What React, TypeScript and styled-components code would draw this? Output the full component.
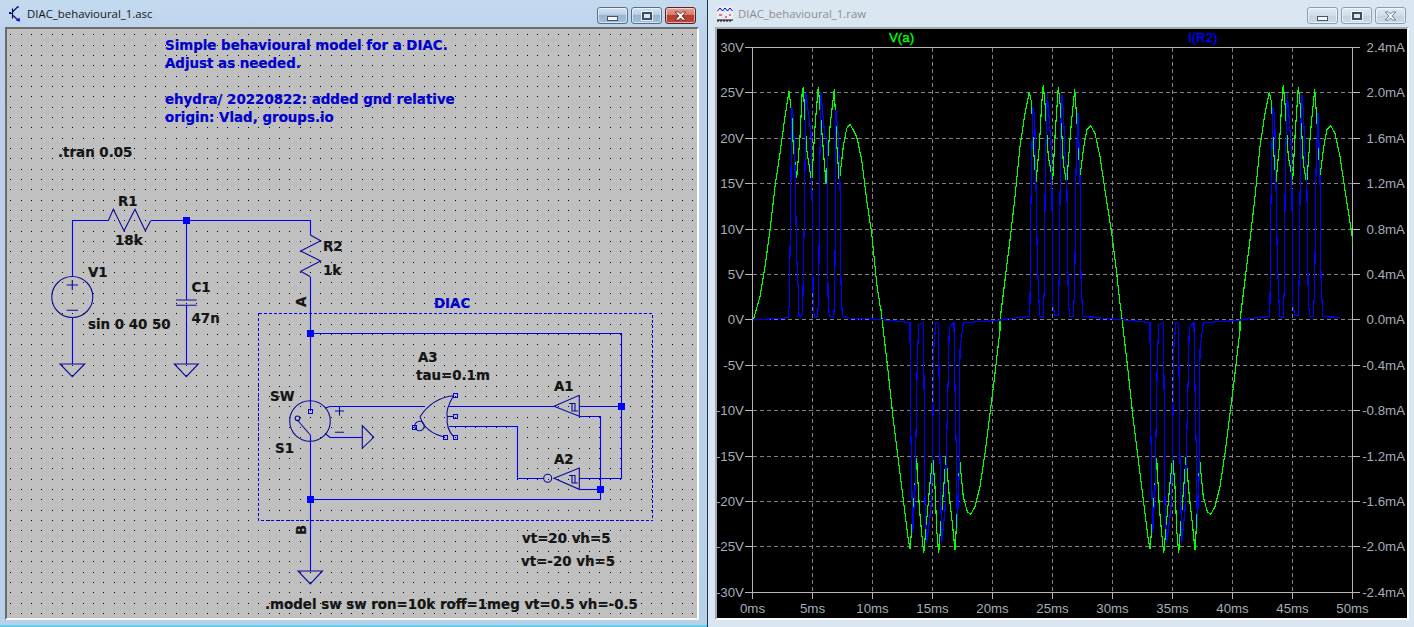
import React from "react";
import styled, { createGlobalStyle } from "styled-components";

const Global = createGlobalStyle`
  html, body { margin: 0; padding: 0; width: 1414px; height: 627px; overflow: hidden; background: #b9d1ea; }
  #root { width: 1414px; height: 627px; }
`;

const Desktop = styled.div`
  display: flex;
  width: 1414px;
  height: 627px;
`;

const Win = styled.section<{ $active?: boolean }>`
  flex: 0 0 707px;
  box-sizing: border-box;
  display: flex;
  flex-direction: column;
  background: ${(p) =>
    p.$active ? "linear-gradient(180deg,#c4daef 0,#bad2ea 40px,#b8d1ea 100%)" : "#dae7f3"};
  border-left: ${(p) => (p.$active ? "none" : "1px solid #1f3347")};
  border-bottom: ${(p) => (p.$active ? "2px solid #5ed0ea" : "none")};
  padding: ${(p) => (p.$active ? "0 8px 5px 5px" : "0 5px 7px 7px")};
`;

const TitleBar = styled.header<{ $active?: boolean }>`
  flex: 0 0 27px;
  display: flex;
  align-items: flex-start;
  margin-right: 3px;
  padding-left: ${(p) => (p.$active ? "4px" : "2px")};
`;

const TitleIcon = styled.svg`
  flex: none;
  margin-top: 6px;
  margin-right: 5px;
`;

const TitleText = styled.h1<{ $active?: boolean }>`
  flex: 1;
  margin: 6px 0 0;
  font: 400 11.4px/16px "Open Sans", "Noto Sans", sans-serif;
  color: ${(p) => (p.$active ? "#161616" : "#8d8d8d")};
  white-space: nowrap;
`;

const Buttons = styled.div`
  display: flex;
  gap: 3px;
  margin-top: 7px;
`;

const CaptionButton = styled.div<{ $kind: "min" | "max" | "close"; $active?: boolean }>`
  box-sizing: border-box;
  width: 31px;
  height: 17px;
  display: flex;
  align-items: center;
  justify-content: center;
  border-radius: 3px;
  border: 1px solid
    ${(p) => (p.$kind === "close" && p.$active ? "#5c2028" : p.$active ? "#5a6f8c" : "#8e9db0")};
  box-shadow: inset 0 0 0 1px rgba(255, 255, 255, 0.55);
  background: ${(p) =>
    p.$kind === "close" && p.$active
      ? "linear-gradient(180deg,#e3a093 0,#d6796b 45%,#b83c2c 50%,#b9473a 100%)"
      : p.$active
      ? "linear-gradient(180deg,#d6e3f0 0,#b8cde3 45%,#98b5d4 50%,#a3bfdb 100%)"
      : "linear-gradient(180deg,#e2ebf5 0,#cfdcea 50%,#c4d3e4 52%,#cbd9e8 100%)"};
`;

const MinGlyph = styled.span`
  display: block;
  width: 11px;
  height: 5px;
  margin-top: 5px;
  box-sizing: border-box;
  background: #f4f7fb;
  border: 1px solid #44546a;
`;

const MaxGlyph = styled.span`
  display: block;
  width: 10px;
  height: 8px;
  box-sizing: border-box;
  border: 2px solid #3d4d63;
  outline: 1px solid rgba(255, 255, 255, 0.75);
  background: #dce6f1;
`;

const CanvasFrame = styled.main<{ $dim?: boolean }>`
  flex: 1;
  min-height: 0;
  box-sizing: border-box;
  border-style: solid;
  border-width: 2px;
  border-color: ${(p) => (p.$dim ? "#a3a9ae" : "#6b6b6b")} #ffffff #ffffff ${(p) => (p.$dim ? "#a3a9ae" : "#6b6b6b")};
`;

const Drawing = styled.svg<{ $bg: string }>`
  display: block;
  width: 100%;
  height: 100%;
  background: ${(p) => p.$bg};
`;

const SchemText = styled.text<{ $blue?: boolean }>`
  font: 700 13.4px "DejaVu Sans", Verdana, sans-serif;
  fill: ${(p) => (p.$blue ? "#0000cc" : "#141414")};
  stroke: ${(p) => (p.$blue ? "#0000cc" : "#141414")};
  stroke-width: 0.2px;
`;

const Wire = styled.polyline`
  fill: none;
  stroke: #0000ff;
  stroke-width: 1.1;
`;

const Sym = styled.path`
  fill: none;
  stroke: #0a0a9a;
  stroke-width: 1.1;
`;

const Node = styled.rect`
  fill: #0000ff;
  shape-rendering: crispEdges;
`;

const Pin = styled.rect`
  fill: none;
  stroke: #0000e0;
  stroke-width: 1;
  shape-rendering: crispEdges;
`;

const DashBox = styled.rect`
  fill: none;
  stroke: #0000e0;
  stroke-width: 1;
  stroke-dasharray: 3 2;
  shape-rendering: crispEdges;
`;

const Dots = styled.path`
  fill: #000;
  shape-rendering: crispEdges;
`;

const AxisLine = styled.path`
  fill: none;
  stroke: #b6b6b6;
  stroke-width: 1;
  shape-rendering: crispEdges;
`;

const GridLine = styled.path`
  fill: none;
  stroke: #808080;
  stroke-width: 1;
  stroke-dasharray: 4 3;
  shape-rendering: crispEdges;
`;

const AxisText = styled.text`
  font: 400 13.3px "Liberation Sans", Arial, sans-serif;
  fill: #a4adb8;
`;

const TraceName = styled.text<{ $color: string }>`
  font: 400 13.3px "Liberation Sans", Arial, sans-serif;
  fill: ${(p) => p.$color};
  stroke: ${(p) => p.$color};
  stroke-width: 0.35px;
`;

const Trace = styled.polyline<{ $color: string }>`
  fill: none;
  stroke: ${(p) => p.$color};
  stroke-width: 1.15;
  shape-rendering: crispEdges;
`;

type P = [number, number];
const seg = (ox: number, oy: number, pts: P[]): P[] => pts.map(([x, y]) => [ox + x / 3, oy + y / 3]);
const str = (pts: P[]) => pts.map(([x, y]) => `${x.toFixed(1)},${y.toFixed(1)}`).join(" ");

const gA: P[] = [[10,750],[30,680],[45,590],[60,480],[75,350],[90,250],[105,140],[117,62],[125,130],[130,230],[140,325],[150,200],[157,60],[160,52],[170,240],[185,335],[195,170],[205,50],[215,180],[228,340],[240,170],[253,58],[260,220],[268,335],[280,230],[290,175],[300,162],[320,200],[335,270],[350,390],[365,490],[380,640],[392,720]];
const gB: P[] = [[63,0],[70,60],[85,190],[100,330],[115,450],[130,570],[145,690],[150,718],[160,600],[170,445],[178,590],[185,670],[191,730],[200,630],[210,520],[218,440],[225,530],[230,660],[236,728],[245,610],[258,440],[268,560],[278,650],[285,720],[293,580],[299,450],[310,560],[322,605],[332,613],[345,590],[360,530],[375,430],[390,310],[405,190],[420,60]];
const gC: P[] = [[0,750],[15,630],[30,510],[45,380],[60,230],[75,130],[88,65],[95,100],[100,230],[108,335],[118,230],[125,100],[130,45],[135,100],[145,260],[158,330],[165,200],[175,50],[182,120],[190,280],[200,340],[212,180],[224,58],[232,170],[240,320],[250,240],[260,180],[272,168],[285,190],[300,260],[315,360],[335,490],[350,610],[360,700]];

const bA: P[] = [[10,750],[115,743],[118,700],[122,400],[125,110],[130,140],[135,290],[140,560],[145,660],[147,738],[152,742],[158,730],[160,600],[163,450],[168,70],[175,130],[183,190],[186,370],[190,720],[195,742],[203,740],[206,670],[209,300],[213,70],[220,150],[225,200],[232,220],[234,680],[238,738],[248,742],[252,730],[255,580],[258,120],[265,200],[270,340],[273,640],[277,738],[300,745],[330,747]];
const bB: P[] = [[0,25],[40,27],[100,32],[150,38],[150,65],[152,340],[155,500],[158,670],[165,540],[172,150],[176,45],[190,37],[192,210],[195,580],[200,700],[206,650],[215,570],[222,100],[228,38],[235,40],[236,100],[240,450],[245,700],[255,600],[265,190],[268,50],[282,38],[283,130],[290,490],[292,655],[298,480],[300,120],[310,38],[400,32]];
const bC: P[] = [[0,750],[50,743],[88,740],[90,700],[92,440],[98,110],[104,140],[107,300],[112,560],[116,680],[120,740],[130,742],[133,650],[136,300],[142,70],[150,180],[155,250],[158,700],[165,738],[175,735],[178,600],[182,180],[186,75],[190,120],[195,250],[200,300],[205,700],[210,740],[220,740],[224,650],[228,300],[234,130],[240,320],[243,620],[248,740],[300,742]];

const greenTrace = [...seg(750, 70, gA), ...seg(860, 310, gB), ...seg(1000, 70, gC), ...seg(1100, 310, gB), ...seg(1240, 70, gC)];
const blueTrace = [...seg(750, 70, bA), ...seg(860, 310, bB), ...seg(1000, 70, bC), ...seg(1100, 310, bB), ...seg(1240, 70, bC)];

const PX0 = 752.5;
const PY0 = 47.5;
const DY = 544.8 / 12;
const xTicks = Array.from({ length: 11 }, (_, i) => i);
const yTicks = Array.from({ length: 13 }, (_, i) => i);
const xAt = (i: number) => Math.round(PX0 + i * 60 - 0.5) + 0.5;
const yAt = (i: number) => Math.round(PY0 + i * DY - 0.5) + 0.5;
const leftLabels = ["30V","25V","20V","15V","10V","5V","0V","-5V","-10V","-15V","-20V","-25V","-30V"];
const rightLabels = ["2.4mA","2.0mA","1.6mA","1.2mA","0.8mA","0.4mA","0.0mA","-0.4mA","-0.8mA","-1.2mA","-1.6mA","-2.0mA","-2.4mA"];

const dotPath = (() => {
  const step = 124 / 12;
  let d = "";
  for (let i = -30; i < 40; i++) {
    const x = Math.round(310 + i * step);
    if (x < 7 || x >= 697) continue;
    for (let j = -19; j < 39; j++) {
      const y = Math.round(220.4 + j * step);
      if (y < 29 || y >= 618) continue;
      d += `M${x} ${y}h1v1h-1z`;
    }
  }
  return d;
})();

const notes: [string, number, number, boolean?][] = [
  ["Simple behavioural model for a DIAC.", 165, 50, true],
  ["Adjust as needed.", 165, 68, true],
  ["ehydra/ 20220822: added gnd relative", 165, 104, true],
  ["origin: Vlad, groups.io", 165, 122, true],
  ["DIAC", 434, 308, true],
  [".tran 0.05", 58, 157],
  ["R1", 118, 206],
  ["18k", 115, 245],
  ["V1", 88, 277],
  ["sin 0 40 50", 88, 329],
  ["C1", 191.5, 292],
  ["47n", 191.5, 323],
  ["R2", 323, 251],
  ["1k", 323, 275],
  ["A3", 418, 362],
  ["tau=0.1m", 416, 380],
  ["A1", 554, 391],
  ["A2", 554, 464],
  ["SW", 270, 401],
  ["S1", 275, 453],
  ["vt=20 vh=5", 522, 543],
  ["vt=-20 vh=5", 521, 566],
  [".model sw sw ron=10k roff=1meg vt=0.5 vh=-0.5", 265, 609],
];

const wires: string[] = [
  "72.5,364 72.5,317",
  "72.5,277 72.5,220.5 108,220.5",
  "151,220.5 310.5,220.5 310.5,235",
  "186.5,220.5 186.5,300",
  "186.5,305 186.5,364",
  "310.5,277 310.5,411",
  "310.5,435 310.5,571",
  "310.5,333.5 621.5,333.5 621.5,478.5 579.5,478.5",
  "621.5,406.5 579.5,406.5",
  "554,406.5 449,406.5",
  "330,406.5 425,406.5",
  "330,437.5 362,437.5",
  "579.5,416.5 600.5,416.5 600.5,499.5 310.5,499.5",
  "579.5,489.5 600.5,489.5",
  "543.5,478.5 517.5,478.5 517.5,426.5 449,426.5",
];

const symbols: string[] = [
  "M108.3 220.7L113.3 209.3L124 230.7L135 209.3L145.3 230.7L150.7 220.7",
  "M310.3 235L320.7 240.7L300.7 251L320.7 261L300.7 271.3L310.3 276.7",
  "M66.7 285H78M72.3 280V290M66.7 310.3H78",
  "M176 300H196.7M176 305.3H196.7",
  "M60 364H84.7L72.3 376.7Z",
  "M174.3 364H198.3L186.3 376.7Z",
  "M298 571H322.5L310.3 584Z",
  "M362.3 425.7V448.3L373.7 437.3Z",
  "M325 408L330 406.5M325 433.3L330 437.5",
  "M297.3 420L310.3 435",
  "M335 411H344M339.5 406.5V415.5M335 432.3H344",
  "M554 406.3L579.3 395.3V416.3Z",
  "M554 478.3L579.3 468V489.3Z",
  "M569 403.5H575V411M572 403.5V411H578",
  "M569 475.5H575V483M572 475.5V483H578",
  "M420 416.7C429 403 441 397 453.5 395.7C448 405 446 412 447.3 416.5C446 426 449 432 454 437.3",
  "M420 416.7C423 427 431 434 445 437.3",
  "M447.3 416.5H453",
];

const circles: [number, number, number][] = [
  [72.3, 297, 20.5],
  [310, 421, 20.3],
  [297.5, 418.3, 2.3],
  [547.7, 478.2, 4],
  [419.5, 426, 4.7],
];

const nodes: P[] = [[186.5,220.5],[310.5,333.5],[621.5,406.5],[600.5,489.5],[310.5,499.5]];
const pins: P[] = [[455,395.5],[455,416.5],[455,437.5],[445,437.5],[414,427],[310.5,411]];

const Schematic = () => (
  <Drawing $bg="#c0c0c0" viewBox="7 29 690 589" preserveAspectRatio="none">
    <Dots d={dotPath} />
    <DashBox x={258.5} y={313.5} width={394} height={207} />
    {wires.map((w) => <Wire key={w} points={w} />)}
    {symbols.map((d) => <Sym key={d} d={d} />)}
    {circles.map(([cx, cy, r]) => <Sym key={cx} as="circle" cx={cx} cy={cy} r={r} />)}
    {nodes.map(([x, y]) => <Node key={`${x}${y}`} x={x - 3.5} y={y - 3.5} width={7} height={7} />)}
    {pins.map(([x, y]) => <Pin key={`${x}${y}`} x={x - 2} y={y - 2} width={4} height={4} />)}
    {notes.map(([t, x, y, blue]) => <SchemText key={t} x={x} y={y} $blue={blue}>{t}</SchemText>)}
    <SchemText x={306} y={307} transform="rotate(-90 306 307)">A</SchemText>
    <SchemText x={306} y={535} transform="rotate(-90 306 535)">B</SchemText>
  </Drawing>
);

const Plot = () => {
  const top = yAt(0);
  const bottom = yAt(12);
  const left = xAt(0);
  const right = xAt(10);
  const hGrid = yTicks.slice(1, 12).map((i) => `M${left} ${yAt(i)}H${right}`).join("");
  const vGrid = xTicks.slice(1, 10).map((i) => `M${xAt(i)} ${top}V${bottom}`).join("");
  const ticks =
    yTicks.map((i) => `M745 ${yAt(i)}H${left}M${right} ${yAt(i)}H1360`).join("") +
    xTicks.map((i) => `M${xAt(i)} ${bottom}V599`).join("");
  return (
    <Drawing $bg="#000" viewBox="717 29 690 589" preserveAspectRatio="none">
      <defs>
        <clipPath id="plot-area">
          <rect x={left} y={top} width={right - left} height={bottom - top} />
        </clipPath>
      </defs>
      <GridLine d={hGrid + vGrid} />
      <AxisLine d={`M${left} ${top}H${right}V${bottom}H${left}Z${ticks}`} />
      <g clipPath="url(#plot-area)">
        <Trace $color="#00ff00" points={str(greenTrace)} />
        <Trace $color="#0000ff" points={str(blueTrace)} />
      </g>
      {yTicks.map((i) => (
        <AxisText key={leftLabels[i]} x={744} y={yAt(i) + 4.5} textAnchor="end">{leftLabels[i]}</AxisText>
      ))}
      {yTicks.map((i) => (
        <AxisText key={rightLabels[i]} x={1405} y={yAt(i) + 4.5} textAnchor="end">{rightLabels[i]}</AxisText>
      ))}
      {xTicks.map((i) => (
        <AxisText key={i} x={xAt(i)} y={612.5} textAnchor="middle">{`${i * 5}ms`}</AxisText>
      ))}
      <TraceName $color="#00ff00" x={889} y={42}>V(a)</TraceName>
      <TraceName $color="#0000ff" x={1188} y={42}>I(R2)</TraceName>
    </Drawing>
  );
};

const CloseX = ({ light }: { light?: boolean }) => (
  <svg width="13" height="10" viewBox="0 0 16 12">
    <path
      d="M1.5 1H5.5L8 3.5L10.5 1H14.5L10 6L14.5 11H10.5L8 8.5L5.5 11H1.5L6 6Z"
      fill={light ? "#f3f6fa" : "#ffffff"}
      stroke={light ? "#5b6a7d" : "#4f2a2e"}
      strokeWidth="1"
    />
  </svg>
);

const Caption = ({ active }: { active?: boolean }) => (
  <Buttons>
    <CaptionButton $kind="min" $active={active}><MinGlyph /></CaptionButton>
    <CaptionButton $kind="max" $active={active}><MaxGlyph /></CaptionButton>
    <CaptionButton $kind="close" $active={active}><CloseX light={!active} /></CaptionButton>
  </Buttons>
);

const TransistorIcon = () => (
  <TitleIcon width="13" height="16" viewBox="0 0 13 16">
    <path d="M3.5 2.5V12.5M0 7.5H3.5M3.5 6L9 0.5M3.5 9L10 15" fill="none" stroke="#10104a" strokeWidth="1.2" />
    <path d="M7 14.5L11 15.5L10.5 11.5Z" fill="#0000ff" />
    <path d="M0 6.5H2M9 0V2" stroke="#0000ff" strokeWidth="1" />
  </TitleIcon>
);

const WaveIcon = () => (
  <TitleIcon width="16" height="16" viewBox="0 0 16 16">
    <rect x="0" y="0" width="16" height="14" fill="#e8eef4" />
    <path d="M0.5 5L3 2L5.5 5L8 2L10.5 5L13 2L15.5 5" fill="none" stroke="#0000e0" strokeWidth="1" />
    <path d="M2 9H5M8 11H10M12 9H14" stroke="#e00000" strokeWidth="1.2" />
    <path d="M0 14H16M1 14V16M4 14V16M7 14V16M10 14V16M13 14V16" stroke="#000" strokeWidth="1" />
  </TitleIcon>
);

export default function App() {
  return (
    <>
      <Global />
      <Desktop>
        <Win $active>
          <TitleBar $active>
            <TransistorIcon />
            <TitleText $active>DIAC_behavioural_1.asc</TitleText>
            <Caption active />
          </TitleBar>
          <CanvasFrame>
            <Schematic />
          </CanvasFrame>
        </Win>
        <Win>
          <TitleBar>
            <WaveIcon />
            <TitleText>DIAC_behavioural_1.raw</TitleText>
            <Caption />
          </TitleBar>
          <CanvasFrame $dim>
            <Plot />
          </CanvasFrame>
        </Win>
      </Desktop>
    </>
  );
}
